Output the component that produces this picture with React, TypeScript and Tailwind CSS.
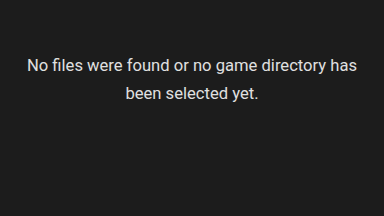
export default function App() {
  return (
    <main className="min-h-screen w-full bg-[#1c1c1c] flex flex-col items-center pt-[52px] px-[20px]">
      <p
        className="text-center text-[16.6px] leading-[28px] text-[#e0e0e0]"
        style={{ fontFamily: "Roboto, 'Noto Sans', sans-serif" }}
      >
        No files were found or no game directory has been selected yet.
      </p>
    </main>
  );
}
